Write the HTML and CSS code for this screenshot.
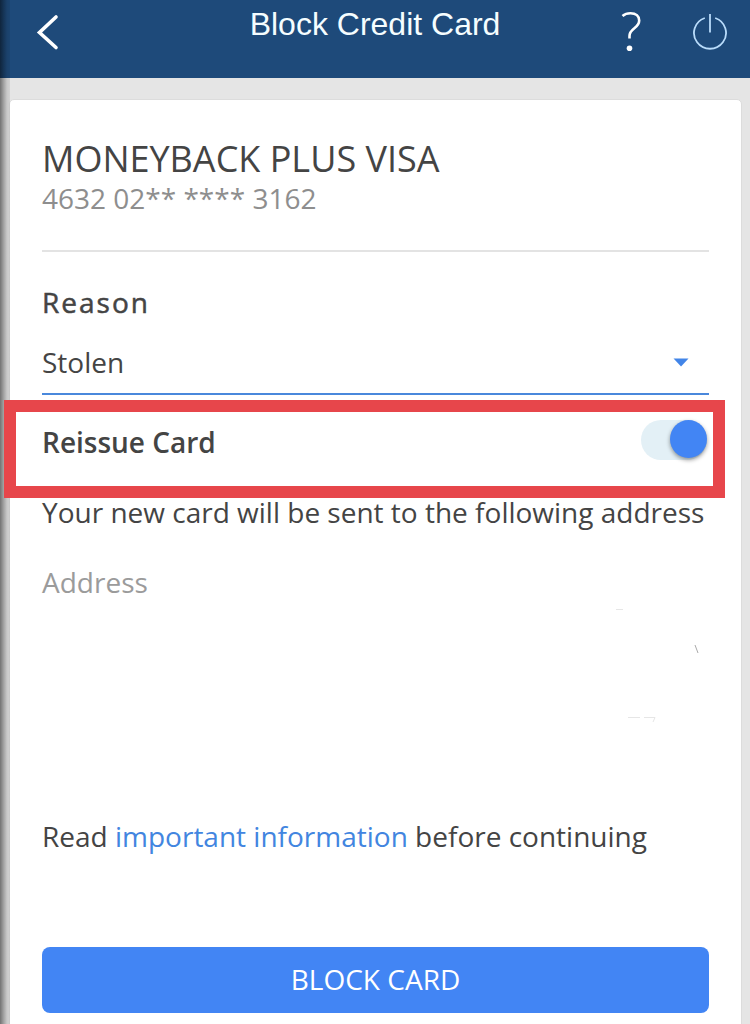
FILE: index.html
```html
<!DOCTYPE html>
<html lang="en">
<head>
    <meta charset="UTF-8">
    <meta name="viewport" content="width=device-width, initial-scale=1.0">
    <title>Block Credit Card</title>
    <link rel="stylesheet" href="styles.css">
</head>
<body>
    <div class="screen">
        <header>
            <svg class="back" width="24" height="38" viewBox="0 0 24 38">
                <path d="M21 3 L4.500 18.500 L21 33.500" />
            </svg>
            <h1>Block Credit Card</h1>
            <div class="actions">
                <svg class="help" width="24" height="44" viewBox="0 0 24 44">
                    <path d="M4.500 8 C7 5.800 10 5.200 12.500 5.200 C18 5.200 21.200 8 21.200 12.500 C21.200 20.500 11.500 20 11.500 28 V30.500" />
                    <circle cx="11.500" cy="40.300" r="2.800" />
                </svg>
                <svg class="power" width="36" height="38" viewBox="0 0 36 38">
                    <path d="M12.800 4 A16 15.800 0 1 0 23.200 4" />
                    <path d="M18 0 V18.500" />
                </svg>
            </div>
        </header>

        <main class="card">
            <div class="card-info">
                <h2>MONEYBACK PLUS VISA</h2>
                <p class="number">4632 02** **** 3162</p>
            </div>

            <p class="label">Reason</p>
            <div class="select">
                <span>Stolen</span>
                <svg width="16" height="9" viewBox="0 0 16 9"><path d="M0.500 0.500 H15.500 L8 8.500 Z" /></svg>
            </div>

            <div class="reissue">
                <span class="reissue-label">Reissue Card</span>
                <div class="toggle"><div class="thumb"></div></div>
                <div class="highlight"></div>
            </div>

            <p class="note">Your new card will be sent to the following address</p>
            <div class="address">
                <span>Address</span>
                <!-- leftovers of the hidden address -->
                <svg width="401" height="170" viewBox="0 0 401 170">
                    <path class="dark" d="M387 83 L390 91" />
                    <path d="M308 47.500 H315 M320 155.500 H332 M336 155.500 H347 L345 160" />
                </svg>
            </div>

            <p class="info">Read <a href="#">important information</a> before continuing</p>
            <button>BLOCK CARD</button>
        </main>
    </div>
</body>
</html>
```
FILE: styles.css
```css
* {
    box-sizing: border-box;
}
body {
    margin: 0;
    background-color: #e5e5e5;
    font-family: "Open Sans", sans-serif;
    font-size: 28px;
    line-height: 40px;
    color: #444;
}
h1, h2, p {
    margin: 0;
    font-weight: 400;
    white-space: nowrap;
}
.screen {
    position: relative;
    height: 1024px;
    overflow: hidden;
}
/* shadow down the left edge of the screen */
.screen::before {
    content: "";
    position: absolute;
    left: 0;
    top: 0;
    width: 10px;
    height: 100%;
    background: linear-gradient(to right, rgba(0, 0, 0, 0.5), rgba(0, 0, 0, 0.3) 35%, rgba(0, 0, 0, 0.12) 70%, rgba(0, 0, 0, 0.08));
}
header {
    display: grid;
    grid-template-columns: 1fr auto 1fr;
    align-items: start;
    height: 78px;
    padding: 0 22px;
    background-color: #1e4a7a;
}
header svg {
    fill: none;
    stroke: #fff;
}
h1 {
    margin-top: 4px;
    font-family: "Liberation Sans", sans-serif;
    font-size: 32px;
    color: #f5fdff;
}
.back {
    margin: 14px 0 0 13px;
    stroke-width: 3.6;
    stroke-linecap: round;
}
.actions {
    display: flex;
    justify-content: flex-end;
    gap: 50px;
}
.help {
    margin-top: 8px;
    stroke-width: 2.6;
}
.help circle {
    fill: #fff;
    stroke: none;
}
.power {
    margin-top: 14px;
    stroke-width: 1.8;
}
header .power {
    stroke: #b9dcfb;
}
.card {
    height: 940px;
    margin: 21px 8px 0 9px;
    padding: 34px 32px 0;
    border: 1px solid #dcdcdc;
    border-radius: 5px;
    background-color: #fff;
}
.card-info {
    height: 118px;
    border-bottom: 2px solid #e3e3e3;
}
h2 {
    font-size: 36px;
    line-height: 50px;
}
.number {
    line-height: 28px;
    color: #8e8e8e;
}
.label {
    margin-top: 30px;
    letter-spacing: 2px;
    -webkit-text-stroke: 0.5px #444;
}
.select {
    display: flex;
    justify-content: space-between;
    align-items: center;
    height: 53px;
    margin-top: 20px;
    padding: 0 20px 11px 0;
    border-bottom: 2px solid #4a88dc;
}
.select svg {
    fill: #4285e8;
}
.reissue {
    position: relative;
    display: flex;
    justify-content: space-between;
    margin-top: 27px;
}
.reissue-label {
    font-weight: 600;
}
.toggle {
    display: flex;
    justify-content: flex-end;
    align-items: flex-start;
    width: 66px;
    height: 40px;
    margin: -2px 2px 0 0;
    border-radius: 20px;
    background-color: #e3f0f6;
}
.thumb {
    width: 37px;
    height: 38px;
    border-radius: 50%;
    background-color: #4285f4;
    box-shadow: 0 2px 4px rgba(0, 0, 0, 0.4);
}
/* red frame around the reissue row */
.highlight {
    position: absolute;
    left: -38px;
    right: -16px;
    top: -22px;
    height: 98px;
    border: 12px solid #e7464b;
}
.note {
    margin-top: 30px;
}
.address {
    display: flex;
    justify-content: space-between;
    height: 224px;
    margin-top: 30px;
    color: #9b9b9b;
}
.address svg {
    fill: none;
    stroke: #e6e6e6;
}
.address .dark {
    stroke: #aaa;
}
.info {
    margin-top: 30px;
}
.info a {
    color: #4285e0;
    text-decoration: none;
}
button {
    display: block;
    width: 100%;
    height: 66px;
    margin-top: 91px;
    padding: 0 0 2px;
    border: none;
    border-radius: 8px;
    background-color: #4285f4;
    color: #fff;
    font: inherit;
}
```
